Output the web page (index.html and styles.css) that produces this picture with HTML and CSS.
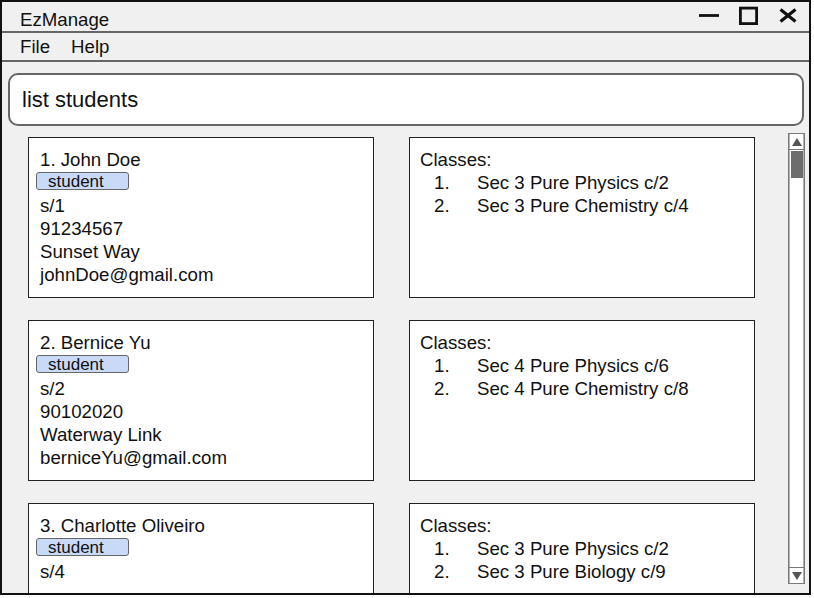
FILE: index.html
```html
<!DOCTYPE html>
<html lang="en">
<head>
<meta charset="utf-8">
<title>EzManage</title>
<link rel="stylesheet" href="styles.css">
</head>
<body>
<div class="window">
  <header class="titlebar">
    <span class="title">EzManage</span>
    <svg class="controls" width="104" height="22" viewBox="0 0 104 22" aria-hidden="true">
      <line x1="6" y1="9.5" x2="26" y2="9.5" stroke="#111" stroke-width="2.8"/>
      <rect x="47.4" y="2.1" width="16.2" height="15.5" fill="none" stroke="#111" stroke-width="2.8"/>
      <line x1="87.5" y1="3.5" x2="102.5" y2="15.5" stroke="#111" stroke-width="3.2"/>
      <line x1="102.5" y1="3.5" x2="87.5" y2="15.5" stroke="#111" stroke-width="3.2"/>
    </svg>
  </header>
  <nav class="menubar">
    <span class="menu-item">File</span>
    <span class="menu-item">Help</span>
  </nav>
  <main class="main">
    <div class="command">list students</div>
    <div class="content">
      <div class="list">
        <div class="card person">
          <div class="line">1. John Doe</div>
          <div class="tag">student</div>
          <div class="line">s/1</div>
          <div class="line">91234567</div>
          <div class="line">Sunset Way</div>
          <div class="line">johnDoe@gmail.com</div>
        </div>
        <div class="card classes">
          <div class="line">Classes:</div>
          <ol class="class-list">
            <li>Sec 3 Pure Physics c/2</li>
            <li>Sec 3 Pure Chemistry c/4</li>
          </ol>
        </div>
        <div class="card person">
          <div class="line">2. Bernice Yu</div>
          <div class="tag">student</div>
          <div class="line">s/2</div>
          <div class="line">90102020</div>
          <div class="line">Waterway Link</div>
          <div class="line">berniceYu@gmail.com</div>
        </div>
        <div class="card classes">
          <div class="line">Classes:</div>
          <ol class="class-list">
            <li>Sec 4 Pure Physics c/6</li>
            <li>Sec 4 Pure Chemistry c/8</li>
          </ol>
        </div>
        <div class="card person">
          <div class="line">3. Charlotte Oliveiro</div>
          <div class="tag">student</div>
          <div class="line">s/4</div>
        </div>
        <div class="card classes">
          <div class="line">Classes:</div>
          <ol class="class-list">
            <li>Sec 3 Pure Physics c/2</li>
            <li>Sec 3 Pure Biology c/9</li>
          </ol>
        </div>
      </div>
      <div class="scrollbar">
        <div class="sb-btn sb-up"><span class="tri-up"></span></div>
        <div class="thumb"></div>
        <div class="sb-btn sb-down"><span class="tri-down"></span></div>
      </div>
    </div>
  </main>
</div>
</body>
</html>
```
FILE: styles.css
```css
* { box-sizing: border-box; }

html, body {
  margin: 0;
  padding: 0;
  background: #ffffff;
}

body {
  font-family: "Liberation Sans", Arial, sans-serif;
  color: #111;
  font-size: 18.67px;
}

.window {
  width: 811px;
  height: 595px;
  border: 2px solid #111;
  background: #f0f0f0;
  display: flex;
  flex-direction: column;
  overflow: hidden;
}

.titlebar {
  height: 31px;
  flex: none;
  display: flex;
  justify-content: space-between;
  align-items: flex-start;
  padding: 0 12px 0 18px;
  border-bottom: 2px solid #666;
}

.title {
  padding-top: 7px;
  line-height: 22px;
}

.controls {
  margin-top: 4px;
  display: block;
}

.menubar {
  height: 29px;
  flex: none;
  display: flex;
  gap: 21px;
  padding: 3px 0 2px 18px;
  line-height: 22px;
  border-bottom: 2px solid #666;
}

.main {
  flex: 1;
  min-height: 0;
  display: flex;
  flex-direction: column;
}

.command {
  flex: none;
  height: 53px;
  margin: 11px 5px 0 6px;
  border: 2px solid #666;
  border-radius: 10px;
  background: #fff;
  padding-left: 12px;
  font-size: 22px;
  line-height: 49px;
}

.content {
  flex: 1;
  min-height: 0;
  display: flex;
  align-items: flex-start;
  overflow: hidden;
}

.list {
  flex: 1;
  display: grid;
  grid-template-columns: 346px 346px;
  column-gap: 35px;
  row-gap: 22px;
  align-content: start;
  padding: 11px 0 0 26px;
}

.card {
  height: 161px;
  background: #fff;
  border: 1px solid #222;
  padding: 10px 11px;
  line-height: 23px;
}

.card.classes {
  padding-left: 10px;
}

.line {
  white-space: nowrap;
}

.tag {
  width: 93px;
  height: 18px;
  margin: 1px 0 4px -4px;
  padding-left: 11px;
  background: #c9daf8;
  border: 1px solid #666;
  border-radius: 3px;
  font-size: 17px;
  line-height: 17px;
}

.class-list {
  list-style: none;
  margin: 0;
  padding: 0 0 0 14px;
  counter-reset: cls;
}

.class-list li {
  counter-increment: cls;
  white-space: nowrap;
}

.class-list li::before {
  content: counter(cls) ".";
  display: inline-block;
  width: 43px;
}

.scrollbar {
  flex: none;
  width: 17px;
  height: 451px;
  margin: 7px 4px 0 0;
  background: #fff;
  border: 1px solid #7a7a7a;
  box-shadow: inset 1px 0 0 #b0b0b0, inset -1px 0 0 #b0b0b0;
  display: flex;
  flex-direction: column;
  align-items: center;
}

.sb-btn {
  width: 100%;
  height: 16px;
  display: flex;
  align-items: center;
  justify-content: center;
}

.sb-up {
  border-bottom: 1px solid #777;
}

.sb-down {
  margin-top: auto;
  border-top: 1px solid #777;
}

.tri-up {
  width: 0;
  height: 0;
  border-left: 5px solid transparent;
  border-right: 5px solid transparent;
  border-bottom: 8px solid #555;
}

.tri-down {
  width: 0;
  height: 0;
  border-left: 5px solid transparent;
  border-right: 5px solid transparent;
  border-top: 8px solid #555;
}

.thumb {
  width: 12px;
  height: 27px;
  margin-top: 1px;
  background: #6d6d6d;
}
```
